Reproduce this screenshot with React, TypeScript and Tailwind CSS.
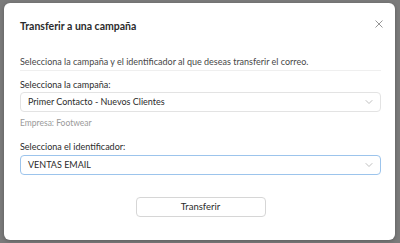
import React from 'react';

function Chevron() {
  return (
    <svg width="10" height="10" viewBox="0 0 10 10" fill="none" className="shrink-0">
      <path d="M2 3.5 L5 6.5 L8 3.5" stroke="#b8b8b8" strokeWidth="0.9" strokeLinecap="round" strokeLinejoin="round" />
    </svg>
  );
}

function SelectBox({ value, active }: { value: string; active?: boolean }) {
  return (
    <div
      className={`flex h-[20px] items-center justify-between rounded-[4px] border bg-white pl-[7px] pr-[6px] text-[9px] text-[#2b2b2b] ${
        active ? 'border-[#9cc4ec]' : 'border-[#e3e3e3]'
      }`}
    >
      <span>{value}</span>
      <Chevron />
    </div>
  );
}

export default function App() {
  return (
    <div
      className="h-[243px] w-[400px] overflow-hidden bg-[#7b7b7b] pl-[4px] pt-[3px]"
      style={{ fontFamily: 'Lato, "Open Sans", sans-serif' }}
    >
      <div className="flex h-[237px] w-[391px] flex-col rounded-[6px] bg-white pl-[16px] pr-[14px] shadow-[0_1px_4px_rgba(0,0,0,0.25)]">
        {/* Header */}
        <div className="flex items-center justify-between pt-[16px]">
          <h2 className="text-[10.5px] font-bold leading-[14px] text-[#2b2b2b]">Transferir a una campaña</h2>
          <svg width="10" height="10" viewBox="0 0 10 10" className="mr-[-3px] mt-[-5px]">
            <path d="M1.5 1.5 L8.5 8.5 M8.5 1.5 L1.5 8.5" stroke="#8a8a8a" strokeWidth="0.9" />
          </svg>
        </div>

        <p className="mt-[22px] text-[9px] leading-[14px] text-[#474747]">
          Selecciona la campaña y el identificador al que deseas transferir el correo.
        </p>

        <div className="mt-[1px] h-px bg-[#efefef]" />

        {/* Campaign */}
        <label className="mt-[7px] block text-[9px] leading-[14px] text-[#2b2b2b]">Selecciona la campaña:</label>
        <SelectBox value="Primer Contacto - Nuevos Clientes" />
        <p className="mt-[4px] text-[8.5px] leading-[14px] text-[#9a9a9a]">Empresa: Footwear</p>

        {/* Identifier */}
        <label className="mt-[10px] block text-[9px] leading-[14px] text-[#2b2b2b]">Selecciona el identificador:</label>
        <div className="mt-[1px]">
          <SelectBox value="VENTAS EMAIL" active />
        </div>

        <div className="mt-[22px] flex justify-center">
          <button className="h-[20px] w-[130px] rounded-[4px] border border-[#d6d6d6] bg-white text-[9.5px] text-[#2b2b2b]">
            Transferir
          </button>
        </div>
      </div>
    </div>
  );
}
